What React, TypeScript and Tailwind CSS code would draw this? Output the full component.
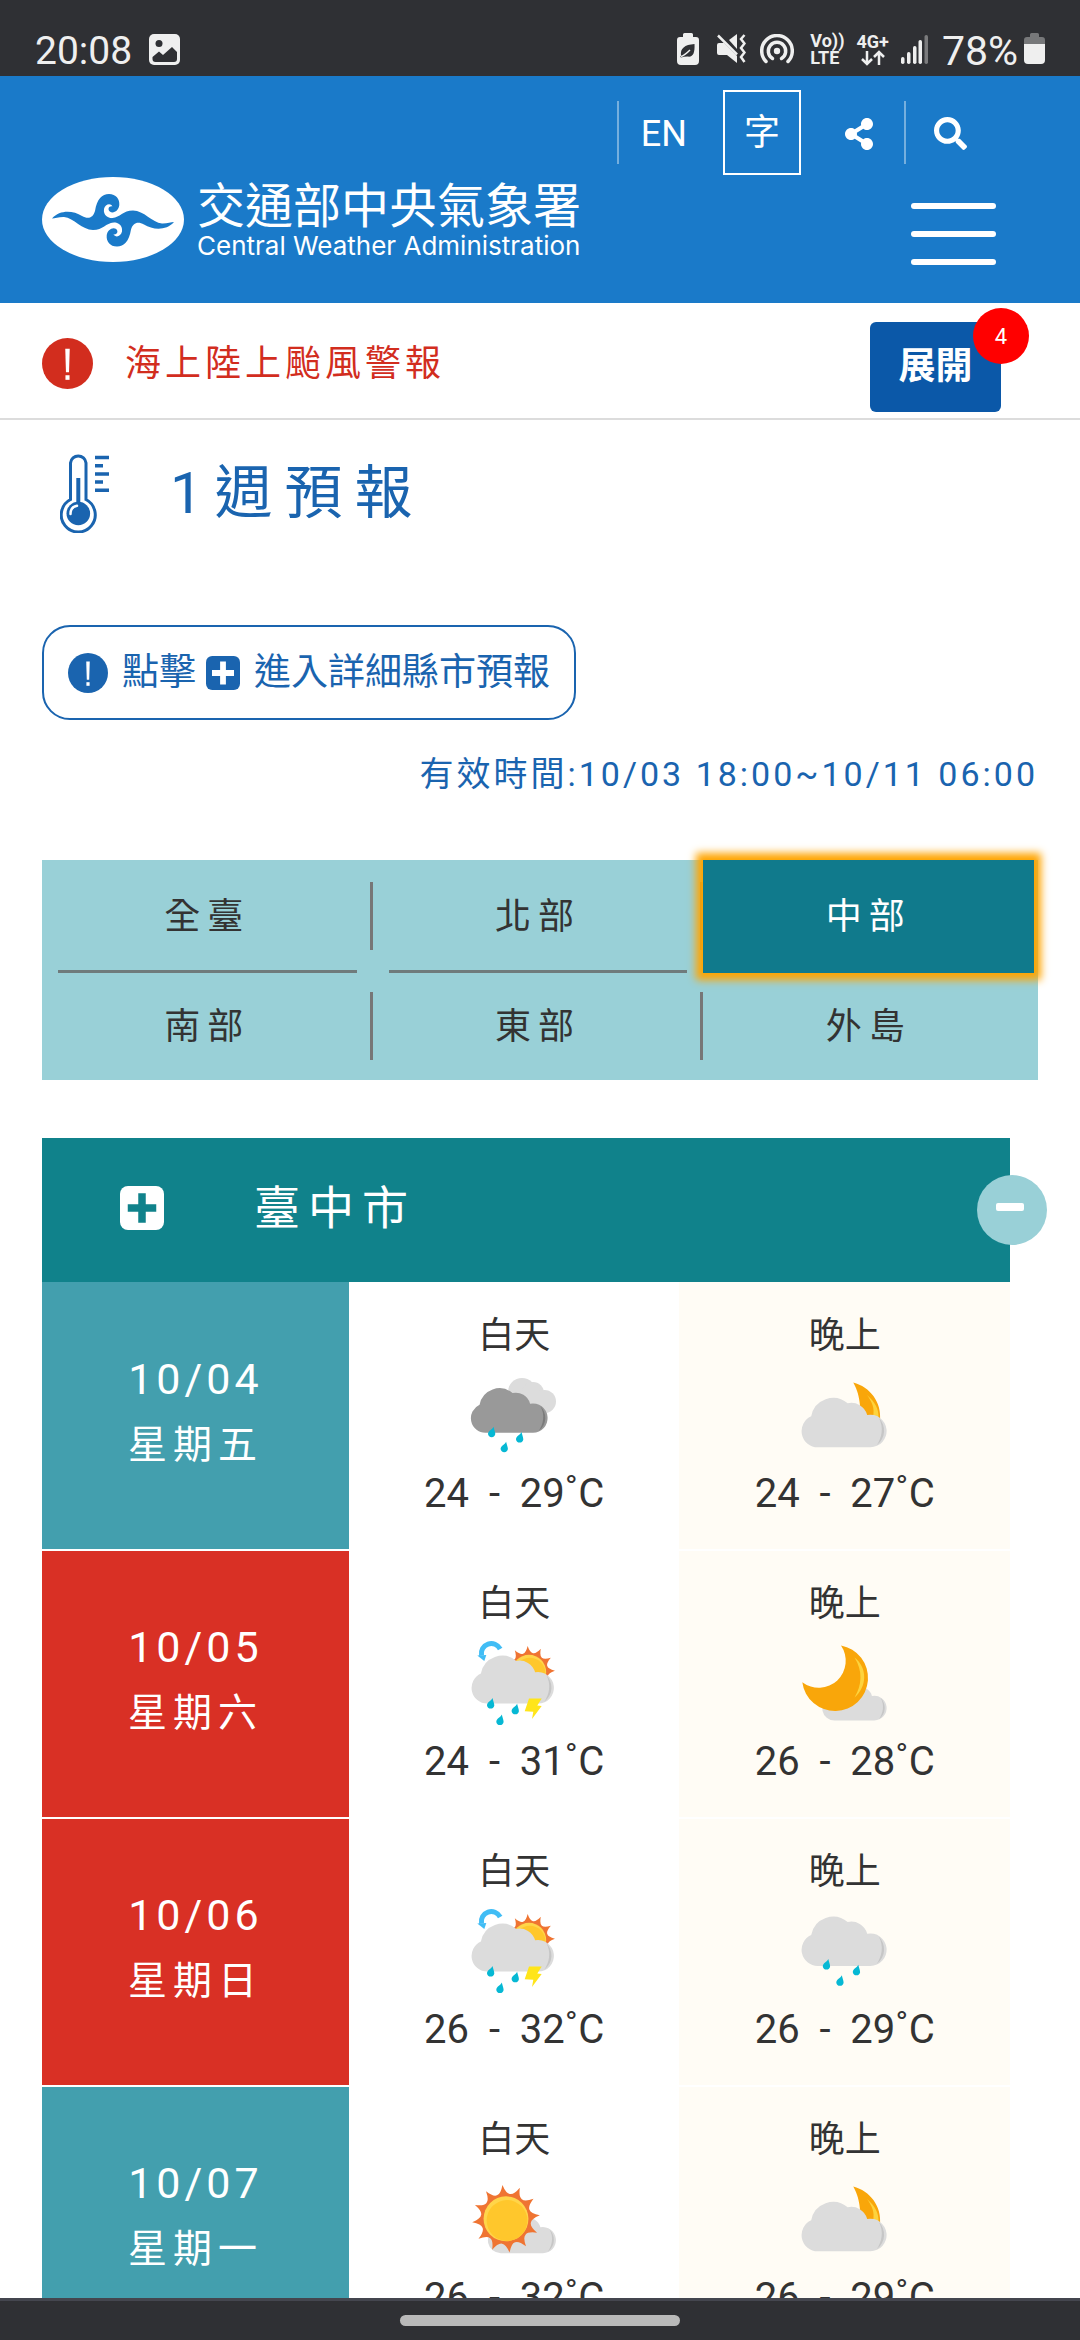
import { useState } from "react";
import type { ReactNode } from "react";
import { FaSearch, FaShareAlt } from "react-icons/fa";

type WeatherKind =
  | "cloudyRain"
  | "cloudyNight"
  | "thunderShower"
  | "clearNight"
  | "rain"
  | "sunny";

interface Period {
  icon: WeatherKind;
  low: number;
  high: number;
}

interface DayForecast {
  date: string;
  weekday: string;
  weekend: boolean;
  day: Period;
  night: Period;
}

const REGIONS = ["全臺", "北部", "中部", "南部", "東部", "外島"];

const FORECAST: DayForecast[] = [
  {
    date: "10/04",
    weekday: "星期五",
    weekend: false,
    day: { icon: "cloudyRain", low: 24, high: 29 },
    night: { icon: "cloudyNight", low: 24, high: 27 },
  },
  {
    date: "10/05",
    weekday: "星期六",
    weekend: true,
    day: { icon: "thunderShower", low: 24, high: 31 },
    night: { icon: "clearNight", low: 26, high: 28 },
  },
  {
    date: "10/06",
    weekday: "星期日",
    weekend: true,
    day: { icon: "thunderShower", low: 26, high: 32 },
    night: { icon: "rain", low: 26, high: 29 },
  },
  {
    date: "10/07",
    weekday: "星期一",
    weekend: false,
    day: { icon: "sunny", low: 26, high: 32 },
    night: { icon: "cloudyNight", low: 26, high: 29 },
  },
];

/* ---------- weather icons ---------- */

interface CloudProps {
  x: number;
  y: number;
  scale?: number;
  fill?: string;
  shade?: string;
}

const Cloud = ({ x, y, scale = 1, fill = "#dcdcdc", shade = "#c6c6c6" }: CloudProps) => (
  <g transform={`translate(${x} ${y}) scale(${scale})`}>
    <path
      fill={fill}
      d="M16 50A16.200 16.200 0 0 1 9.500 19A22.300 22.300 0 0 1 46 6A16.500 16.500 0 0 1 65.500 17.700A16.300 16.300 0 1 1 68.700 50Z"
    />
    <path fill={shade} d="M77 20.500C84.500 28 84.500 41 75 48C80 41 82.500 30 77 20.500Z" />
  </g>
);

const Drop = ({ x, y }: { x: number; y: number }) => (
  <path
    transform={`translate(${x} ${y})`}
    fill="#06b8d4"
    d="M1.800 0C2.400 3 3.600 5 3.600 7.400A3.700 3.700 0 0 1 -3.700 7.400C-3.700 4 0.600 3 1.800 0Z"
  />
);

const sunRays = (radius: number, startAngle: number) => {
  const at = (angle: number, r: number) => {
    const rad = (angle * Math.PI) / 180;
    return `${(Math.cos(rad) * r).toFixed(2)} ${(Math.sin(rad) * r).toFixed(2)}`;
  };
  let d = `M${at(startAngle, radius)}`;
  for (let i = 0; i < 12; i++) {
    const a = startAngle + i * 30;
    d += `Q${at(a + 6, radius * 0.74)} ${at(a + 15, radius * 0.74)}`;
    d += `Q${at(a + 24, radius * 0.74)} ${at(a + 30, radius)}`;
  }
  return d + "Z";
};

interface SunProps {
  x: number;
  y: number;
  radius: number;
  startAngle: number;
}

const Sun = ({ x, y, radius, startAngle }: SunProps) => (
  <g transform={`translate(${x} ${y})`}>
    <path d={sunRays(radius, startAngle)} fill="#ef7432" />
    <circle r={radius * 0.66} fill="#ffd54a" />
    <circle r={radius * 0.6} cx={radius * 0.03} cy={radius * 0.05} fill="#ffc72c" />
  </g>
);

const WEATHER_ART: Record<WeatherKind, { label: string; art: ReactNode }> = {
  cloudyRain: {
    label: "陰短暫雨",
    art: (
      <>
        <g fill="#dcdcdc">
          <circle cx="53" cy="21" r="14" />
          <circle cx="64" cy="22" r="11" />
          <circle cx="75.500" cy="30.500" r="11.500" />
          <path d="M45 20h26l3 22H50Z" />
        </g>
        <Cloud x={2} y={16.7} scale={0.902} fill="#999999" shade="#7b7b7b" />
        <Drop x={22.7} y={55.7} />
        <Drop x={50.7} y={61} />
        <Drop x={35.3} y={70.7} />
      </>
    ),
  },
  cloudyNight: {
    label: "多雲",
    art: (
      <>
        <path fill="#f9a60a" d="M53.300 11.500C70 16 82 31 80 50L62 46C59 40 62 27 53.300 11.500Z" />
        <path fill="#fdd33d" d="M67 24C75 31 79 38 78.500 47L73 46C75 37 72 31 67 24Z" />
        <Cloud x={1.7} y={26.3} />
      </>
    ),
  },
  thunderShower: {
    label: "午後短暫雷陣雨",
    art: (
      <>
        <Sun x={60} y={33} radius={26} startAngle={-93} />
        <path d="M31.200 10A10 10 0 0 0 12.500 16.500" fill="none" stroke="#41bdf5" strokeWidth="5" />
        <path d="M8.300 16.500L17.300 16L15.300 22Z" fill="#41bdf5" />
        <Cloud x={2.7} y={16.2} scale={0.968} />
        <Drop x={21.7} y={59} />
        <Drop x={46.3} y={64.8} />
        <Drop x={31} y={75.5} />
        <path
          fill="#ffe51a"
          d="M60 59.500H72.700L68.300 66.500L72.700 67L63 80L64.300 72.800L55.700 72.200Z"
        />
      </>
    ),
  },
  clearNight: {
    label: "晴時多雲",
    art: (
      <>
        <Cloud x={22.3} y={43.5} scale={0.758} />
        <path
          fill="#f9a60a"
          d="M41 6.500A33 33 0 1 1 2.300 43.200A27 27 0 0 0 41 6.500Z"
        />
        <path fill="#fdd33d" d="M54.500 18.500C68 29 67 48 54.500 58.500C62 46 63 32 54.500 18.500Z" />
      </>
    ),
  },
  rain: {
    label: "陰短暫雨",
    art: (
      <>
        <Cloud x={1.7} y={9} />
        <Drop x={26.5} y={52} />
        <Drop x={56.5} y={57.8} />
        <Drop x={40} y={68.3} />
      </>
    ),
  },
  sunny: {
    label: "晴時多雲",
    art: (
      <>
        <Cloud x={19} y={38.2} scale={0.8} />
        <Sun x={37} y={43.8} radius={34} startAngle={-96} />
      </>
    ),
  },
};

const WeatherIcon = ({ kind }: { kind: WeatherKind }) => (
  <svg viewBox="0 0 90 90" className="size-[90px]" role="img" aria-label={WEATHER_ART[kind].label}>
    {WEATHER_ART[kind].art}
  </svg>
);

/* ---------- small icons ---------- */

const AlertCircle = ({ className }: { className: string }) => (
  <svg viewBox="0 0 50 50" className={className} aria-hidden="true">
    <circle cx="25" cy="25" r="25" fill="currentColor" />
    <path d="M22.800 10.500h4.400l-.7 23h-3Z" fill="#fff" />
    <rect x="23" y="36.500" width="4" height="4.500" fill="#fff" />
  </svg>
);

const PlusBox = ({ className, cross }: { className: string; cross: string }) => (
  <svg viewBox="0 0 44 44" className={className} aria-hidden="true">
    <rect width="44" height="44" rx="8" fill="currentColor" />
    <path d="M22 11v22M11.500 22h21" stroke={cross} strokeWidth="7.500" strokeLinecap="square" />
  </svg>
);

const Thermometer = () => (
  <svg viewBox="0 0 50 80" className="h-20 w-[50px]" fill="none" stroke="#1a64af" aria-hidden="true">
    <path
      strokeWidth="3"
      d="M10.500 46.500V10A7.800 8 0 0 1 26 10V46.500A17 17.200 0 1 1 10.500 46.500Z"
    />
    <path strokeWidth="4" d="M18.300 25V52" />
    <circle cx="18.300" cy="60.500" r="11.800" fill="#1a64af" stroke="none" />
    <path stroke="#fff" strokeWidth="2.500" strokeLinecap="round" d="M10.500 61C10.500 56.500 13 53.500 17 52.800" />
    <path strokeWidth="3.500" d="M35 4.500h14M35 12.700h8M35 21h14M35 29h8M35 37.300h14" />
  </svg>
);

const AgencyLogo = () => {
  const wing =
    "M10 41.500C18 32.500 31 33.500 40 39C46 42.500 51 41 53 34C55 22 60 17 67 17C74 17 77.800 22 77.300 28C76.800 34 71 37 67.800 34.500C65.200 32 67 28.500 70.500 29.300C68.500 25.500 63 27 62 32C61 38 66 41.500 71.500 41.500L78 44L71.500 45.500C64 46 61 53 51 53C40 53 32 41 22 40C17 39.800 13 41.500 10 41.500Z";
  return (
    <svg viewBox="0 0 142 85" className="h-[85px] w-[142px]" aria-hidden="true">
      <ellipse cx="71" cy="42.500" rx="71" ry="42.500" fill="#fff" />
      <path d={wing} fill="#1a7ac9" />
      <path d={wing} fill="#1a7ac9" transform="rotate(180 71 43.300)" />
    </svg>
  );
};

/* ---------- phone status bar ---------- */

const StatusBar = () => (
  <div className="flex h-[76px] shrink-0 items-end justify-between bg-[#2f3034] px-[35px] pb-1.5 text-[#efefef]">
    <div className="flex items-center gap-[17px]">
      <span className="pt-1 text-[39px] leading-[38px]">20:08</span>
      <svg viewBox="0 0 31 31" className="size-[31px]" aria-hidden="true">
        <rect width="31" height="31" rx="5" fill="#efefef" />
        <circle cx="10" cy="9.500" r="3.500" fill="#2f3034" />
        <path d="M3.500 23L10 17.500L14 21L23 13L28 18V25Q28 28 25 28H6.500Q3.500 28 3.500 25Z" fill="#2f3034" />
      </svg>
    </div>
    <div className="flex items-center">
      <svg viewBox="0 0 22 32" className="mr-[17px] h-8 w-[22px]" aria-hidden="true">
        <path d="M6 1.500Q6 0 7.500 0H14.500Q16 0 16 1.500V4H19Q22 4 22 7V28Q22 32 18 32H4Q0 32 0 28V7Q0 4 3 4H6Z" fill="#efefef" />
        <path d="M17.500 11C18 20 16 24.500 10.500 23.500Q7 23.500 4 24.500Q2.500 24 4 22.500Q2.500 12 17.500 11Z" fill="#2f3034" />
        <path d="M4 23.500Q8 22 13 17" fill="none" stroke="#efefef" strokeWidth="1.500" />
      </svg>
      <svg viewBox="0 0 30 30" className="mr-3.5 size-[30px]" aria-hidden="true">
        <path d="M1 11Q1 9 3 9H8L21 22V29L11 21H3Q1 21 1 19Z" fill="#efefef" />
        <path d="M13 6L21 0V15Z" fill="#efefef" />
        <path d="M2 1.500L21 20.500" stroke="#efefef" strokeWidth="2.500" />
        <path d="M28.500 1L25 5L28.500 9.500L25 14L28.500 18.500L25 23L28.500 28" fill="none" stroke="#efefef" strokeWidth="2.500" />
      </svg>
      <svg viewBox="0 0 34 30" className="mr-4 h-[30px] w-[34px]" fill="none" stroke="#efefef" strokeWidth="3.500" strokeLinecap="round" aria-hidden="true">
        <circle cx="17" cy="17" r="3.200" fill="#efefef" stroke="none" />
        <path d="M12.500 24.500A8.700 8.700 0 1 1 21.500 24.500" />
        <path d="M6 27.500A15.300 15.300 0 1 1 28 27.500" />
      </svg>
      <div className="mr-3 text-[18px] leading-[17px] font-bold">
        <div>Vo))</div>
        <div>LTE</div>
      </div>
      <div className="mr-3 flex flex-col items-center text-[18px] leading-[17px] font-bold">
        <div>4G+</div>
        <svg viewBox="0 0 24 16" className="h-4 w-6" fill="none" stroke="#efefef" strokeWidth="2.500" aria-hidden="true">
          <path d="M6 1V14M1 9L6 14L11 9M18 15V2M13 7L18 2L23 7" />
        </svg>
      </div>
      <svg viewBox="0 0 27 30" className="mr-3.5 h-[30px] w-[27px]" fill="#efefef" aria-hidden="true">
        <rect x="0" y="23" width="3.500" height="7" rx="1.700" />
        <rect x="6" y="18" width="3.500" height="12" rx="1.700" />
        <rect x="12" y="12" width="3.500" height="18" rx="1.700" />
        <rect x="17.500" y="6" width="3.500" height="24" rx="1.700" />
        <rect x="23.500" y="1" width="3.500" height="29" rx="1.700" fill="#7b7b7d" />
      </svg>
      <span className="mr-1.5 pt-1 text-[41px] leading-[38px]">78%</span>
      <svg viewBox="0 0 21 32" className="h-8 w-[21px]" aria-hidden="true">
        <path d="M6 1.500Q6 0 7.500 0H13.500Q15 0 15 1.500V4H18Q21 4 21 7V12H0V7Q0 4 3 4H6Z" fill="#77787a" />
        <path d="M0 11H21V27Q21 31 17 31H4Q0 31 0 27Z" fill="#efefef" />
      </svg>
    </div>
  </div>
);

const SiteHeader = () => (
  <header className="flex shrink-0 items-end justify-between bg-[#1a7ac9] pt-[14px] pr-[84px] pb-[38px] pl-[42px] text-white">
    <a href="#home" className="mb-[3px] flex items-center gap-[13px]">
      <AgencyLogo />
      <span className="flex flex-col">
        <span className="text-[48px] leading-[52px]">交通部中央氣象署</span>
        <span className="font-[Inter,sans-serif] text-[26px] leading-[26px]">
          Central Weather Administration
        </span>
      </span>
    </a>
    <div className="flex flex-col items-end">
      <nav className="mr-[29px] flex items-center">
        <a href="#en" className="flex h-[63px] items-center border-l-2 border-white/40 pt-0.5 pl-[22px] text-[36px]">
          EN
        </a>
        <button
          type="button"
          className="ml-9 flex h-[85px] w-[78px] items-center justify-center border-2 border-white text-[36px] leading-none"
        >
          字
        </button>
        <button type="button" aria-label="分享" className="ml-[42px] pt-0.5">
          <FaShareAlt className="size-8" />
        </button>
        <div className="ml-[29px] flex h-[63px] items-center border-l-2 border-white/40 pt-0.5 pl-7">
          <button type="button" aria-label="搜尋">
            <FaSearch className="size-[33px]" />
          </button>
        </div>
      </nav>
      <button type="button" aria-label="選單" className="mt-7 flex w-[85px] flex-col gap-[22px]">
        <span className="h-1.5 w-full rounded-full bg-white" />
        <span className="h-1.5 w-full rounded-full bg-white" />
        <span className="h-1.5 w-full rounded-full bg-white" />
      </button>
    </div>
  </header>
);

const WarningBar = () => (
  <div className="flex items-start justify-between border-b-2 border-[#dcdcdc] pt-[19px] pr-[79px] pb-1.5 pl-[42px]">
    <a href="#warning" className="flex h-[82px] items-center gap-8 text-[#d22d1e]">
      <AlertCircle className="size-[51px]" />
      <span className="pt-0.5 text-[36px] tracking-[4px]">海上陸上颱風警報</span>
    </a>
    <button
      type="button"
      className="relative h-[90px] w-[131px] rounded-md bg-[#0b58a8] text-[37px] font-bold text-white"
    >
      展開
      <span className="absolute -top-3.5 -right-7 flex size-14 items-center justify-center rounded-full bg-[#ff0000] text-[22px] font-normal">
        4
      </span>
    </button>
  </div>
);

interface RegionTabsProps {
  selected: string;
  onSelect: (region: string) => void;
}

const RegionTabs = ({ selected, onSelect }: RegionTabsProps) => (
  <div className="mt-[61px] grid grid-cols-3 bg-[#99d0d7] pr-1">
    {REGIONS.map((region, i) => {
      const active = region === selected;
      return (
        <button
          key={region}
          type="button"
          aria-pressed={active}
          onClick={() => onSelect(region)}
          className={
            active
              ? "relative z-10 -mb-[3px] h-[113px] bg-[#107a8c] text-[36px] tracking-[7px] text-white shadow-[0_0_8px_7px_#ffa500]"
              : "relative h-[110px] pt-[3px] text-[36px] tracking-[7px] text-[#333]"
          }
        >
          {region}
          {!active && i % 3 !== 2 && (
            <span className="absolute top-[22px] right-0 h-[68px] w-[3px] bg-[#777]" />
          )}
          {!active && i < 3 && (
            <span className="absolute inset-x-4 -bottom-[3px] h-[3px] bg-[#6f7b7c]" />
          )}
        </button>
      );
    })}
  </div>
);

const PeriodCell = ({ label, period }: { label: string; period: Period }) => (
  <div className="flex flex-col items-center gap-2 text-[#333]">
    <span className="text-[36px] leading-[54px]">{label}</span>
    <WeatherIcon kind={period.icon} />
    <span className="text-[40px] leading-[50px] whitespace-pre">
      {`${period.low}  -  ${period.high}˚C`}
    </span>
  </div>
);

const CityForecast = () => {
  const [open, setOpen] = useState(true);

  return (
    <section className="mt-[58px] mr-7">
      <div className="relative flex h-36 items-center bg-[#10828b] pl-[78px] text-white">
        <a href="#taichung" className="flex items-center gap-[90px] pb-1">
          <PlusBox className="size-11" cross="#10828b" />
          <h2 className="text-[46px] tracking-[8px]">臺中市</h2>
        </a>
        <button
          type="button"
          aria-label="收合"
          aria-expanded={open}
          onClick={() => setOpen(!open)}
          className="absolute top-[37px] -right-[37px] flex size-[70px] items-center justify-center rounded-full bg-[#99d0d7] pr-1 pb-1.5"
        >
          <span className="h-2 w-7 rounded-xs bg-white" />
        </button>
      </div>
      {open && (
        <table className="w-full table-fixed border-collapse">
          <colgroup>
            <col className="w-[31.7%]" />
            <col />
            <col />
          </colgroup>
          <tbody>
            {FORECAST.map((item) => (
              <tr key={item.date} className="h-[268px] border-b-2 border-white">
                <th
                  scope="row"
                  className={
                    item.weekend
                      ? "bg-[#d93025] pb-2 font-normal text-white"
                      : "bg-[#439fae] pb-2 font-normal text-white"
                  }
                >
                  <div className="text-[43px] leading-[66px] tracking-[4px]">{item.date}</div>
                  <div className="text-[39px] leading-[66px] tracking-[6px]">{item.weekday}</div>
                </th>
                <td className="pb-1">
                  <PeriodCell label="白天" period={item.day} />
                </td>
                <td className="bg-[#fffcf5] pb-1">
                  <PeriodCell label="晚上" period={item.night} />
                </td>
              </tr>
            ))}
          </tbody>
        </table>
      )}
    </section>
  );
};

const App = () => {
  const [region, setRegion] = useState("中部");

  return (
    <div
      lang="zh-TW"
      className="flex h-screen flex-col bg-white font-[Roboto,'Noto_Sans_CJK_TC',sans-serif]"
    >
      <StatusBar />
      <SiteHeader />
      <main className="min-h-0 flex-1 overflow-hidden">
        <WarningBar />
        <div className="px-[42px] pt-[33px]">
          <div className="flex h-20 items-center gap-[60px] pl-[18px] text-[#1a64af]">
            <Thermometer />
            <h1 className="text-[58px] leading-none tracking-[12px]">1週預報</h1>
          </div>
          <div className="mt-[92px] flex h-[95px] w-fit items-center rounded-[28px] border-2 border-[#1a64af] px-6 text-[37px] text-[#1a64af]">
            <AlertCircle className="mr-3.5 size-10" />
            點擊
            <PlusBox className="mr-3.5 ml-2.5 size-[34px]" cross="#fff" />
            進入詳細縣市預報
          </div>
          <p className="mt-[29px] text-right text-[34px] leading-[50px] tracking-[3px] text-[#1a64af]">
            有效時間:10/03 18:00~10/11 06:00
          </p>
          <RegionTabs selected={region} onSelect={setRegion} />
          <CityForecast />
        </div>
      </main>
      <footer className="flex h-[42px] shrink-0 items-center justify-center border-t-3 border-[#44464f] bg-[#2f3034]">
        <span className="h-[11px] w-[280px] rounded-full bg-[#b9b9b9]" />
      </footer>
    </div>
  );
};

export default App;
